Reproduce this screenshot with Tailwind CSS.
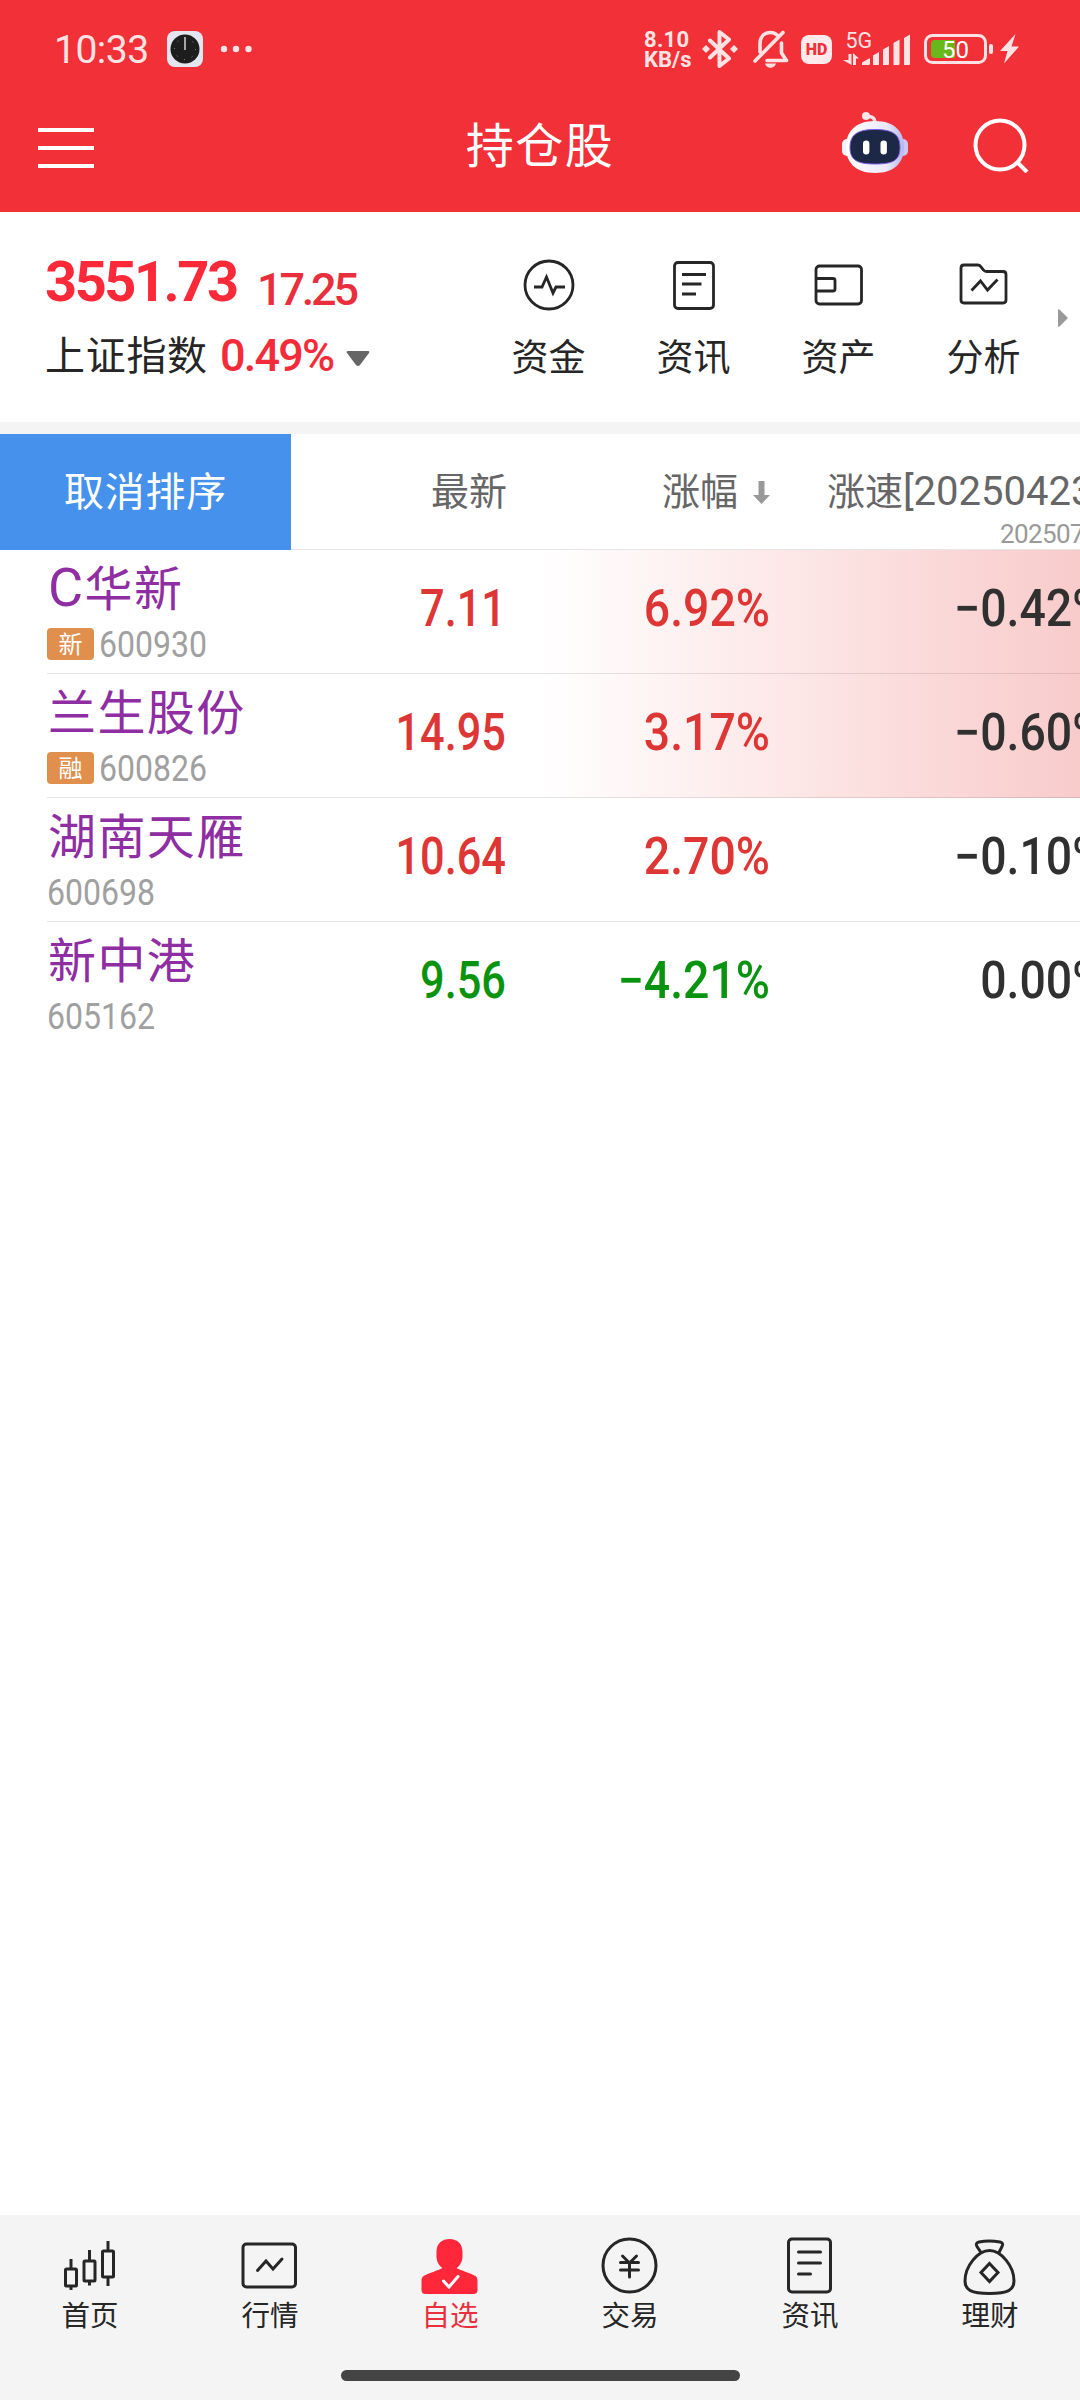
<!DOCTYPE html>
<html lang="zh-CN">

<head>
    <meta charset="UTF-8" />
    <meta name="viewport" content="width=device-width, initial-scale=1.0" />
    <script src="https://cdn.jsdelivr.net/npm/@tailwindcss/browser@4"></script>
    <title>持仓股</title>
</head>

<body class="w-[1080px] h-[2400px] flex flex-col bg-white overflow-hidden text-[#262626] font-['Noto_Sans_CJK_SC',sans-serif]">
    <!-- Header -->
    <header class="h-[212px] shrink-0 bg-[#f13038] text-white">
        <!-- Status bar -->
        <div class="h-[98px] flex items-center justify-between pl-[54px] pr-[61px] text-[#ffe3e4] font-[Roboto,sans-serif]">
            <div class="flex items-center">
                <span class="w-[113px] text-[39px] leading-none tracking-[-0.5px] mt-0.5">10:33</span>
                <svg class="w-9 h-9" viewBox="0 0 36 36">
                    <rect width="36" height="36" rx="8" fill="#e3e6ee" />
                    <circle cx="18" cy="18" r="14.5" fill="#1d1d1d" />
                    <circle cx="18" cy="18" r="10.5" fill="none" stroke="#999" stroke-width="1" stroke-dasharray="1 7.2" />
                    <path d="M18 6v13" stroke="#a5a5a5" stroke-width="2" />
                </svg>
                <svg class="w-8 h-2 ml-[17px]" viewBox="0 0 32 8" fill="currentColor">
                    <circle cx="4" cy="4" r="3.2" />
                    <circle cx="16" cy="4" r="3.2" />
                    <circle cx="28.500" cy="4" r="3.2" />
                </svg>
            </div>
            <div class="flex items-center">
                <div class="w-[49px] text-[22px] leading-[20px] font-bold mt-0.5 -ml-px mr-px">
                    <div class="tracking-[0.3px]">8.10</div>
                    <div>KB/s</div>
                </div>
                <svg class="w-9 h-[38px] ml-2" viewBox="0 0 36 38" fill="none" stroke="currentColor" stroke-width="4"
                    stroke-linejoin="round" stroke-linecap="round">
                    <path d="M8 10.500 27 28.500 17.500 36V2L27 9.500 8 27.500" />
                    <path d="M4 15l4 4-4 4-4-4zM32 15l4 4-4 4-4-4z" fill="currentColor" stroke="none" />
                </svg>
                <svg class="w-9 h-[38px] ml-[15px]" viewBox="0 0 36 38" fill="none" stroke="currentColor" stroke-width="3.600"
                    stroke-linecap="round" stroke-linejoin="round">
                    <path d="M2 31 30 2.500M7 22V14C7 7 11 2.500 17.500 2.500c3 0 5 1 6.500 2.500M28.500 13v10l5 7.500H14" />
                    <path d="M12 33.500h11c-1 3-3 4.300-5.500 4.300S13 36.500 12 33.500z" fill="currentColor" stroke="none" />
                </svg>
                <div class="w-[31px] h-[29px] ml-3 rounded-lg bg-[#ffe9ea] text-[#f13038] text-[16px] leading-[29px] font-black text-center">HD</div>
                <svg class="w-[68px] h-[34px] ml-[11px]" viewBox="0 0 68 34" fill="currentColor">
                    <text x="2.500" y="15.500" font-size="21.500">5G</text>
                    <path d="M5.500 22h3v11L0 28h5.500zM10 33V21l6 5.500h-3V33z" />
                    <path d="M19 33v-2.500l8-4.500v5.500q0 1.500-1.500 1.500zM30 33V23.500l6-3.500v12q0 1-1 1zM40 33V17.500l6-3.500v18q0 1-1 1zM50.500 33V11l6-3.500v24.500q0 1-1 1zM61 33V6l6-3.500v29.500q0 1-1 1z" />
                </svg>
                <svg class="w-[70px] h-[30px] ml-[13px]" viewBox="0 0 70 30">
                    <rect x="1.500" y="1.500" width="60" height="27" rx="7" fill="none" stroke="currentColor" stroke-width="3" />
                    <path d="M31 6v18H11q-4 0-4-4V10q0-4 4-4z" fill="#68b81c" />
                    <rect x="65" y="10" width="4" height="10" rx="2" fill="currentColor" />
                    <text x="31.500" y="23.500" font-size="24" fill="#fff" text-anchor="middle">50</text>
                </svg>
                <svg class="w-[19px] h-[30px] ml-1.5" viewBox="0 0 19 30" fill="currentColor">
                    <path d="M15.500 0 0 17h7.500L4 29.500 19 12.500h-7.500z" />
                </svg>
            </div>
        </div>
        <!-- Title bar -->
        <div class="h-[94px] grid grid-cols-3 items-center pl-[38px] pr-[51px]">
            <svg class="w-14 h-10 mt-1.5" viewBox="0 0 56 40" stroke="#fff" stroke-width="4">
                <path d="M0 2h56M0 20h56M0 38h56" />
            </svg>
            <h1 class="text-[48px] leading-[60px] tracking-[1.5px] text-center -mt-1.5 ml-[13px]">持仓股</h1>
            <div class="flex items-center justify-end gap-[64px]">
                <svg class="w-[66px] h-[62px] -mt-1" viewBox="0 0 66 62">
                    <defs>
                        <linearGradient id="shell" x1="0" x2="1">
                            <stop offset="0" stop-color="#fff" />
                            <stop offset=".7" stop-color="#ece9fb" />
                            <stop offset="1" stop-color="#b5b7ee" />
                        </linearGradient>
                    </defs>
                    <path d="M25 4.500q8-1 8 7" fill="none" stroke="#fbdfe8" stroke-width="3.500" />
                    <circle cx="24" cy="4" r="4" fill="#fce6ec" />
                    <rect x="0" y="27" width="12" height="17" rx="5" fill="#f1effc" />
                    <rect x="54" y="27" width="12" height="17" rx="5" fill="#c9caf4" />
                    <path d="M33 9c20 0 29 11 29 26S53 61 33 61 4 50 4 35 13 9 33 9z" fill="url(#shell)" />
                    <path d="M33 17.500c18 0 25 5 25 18S51 52 33 52 8 48 8 35.500s7-18 25-18z" fill="#1d2746" stroke="#7b5ce8" stroke-width="1" />
                    <rect x="21" y="28.500" width="6.400" height="14" rx="3.200" fill="#fff" />
                    <rect x="38.500" y="28.500" width="6.400" height="14" rx="3.200" fill="#fff" />
                </svg>
                <svg class="w-[57px] h-[56px]" viewBox="0 0 57 56" fill="none" stroke="#fff" stroke-width="4">
                    <circle cx="28" cy="28" r="24.500" />
                    <path d="M45 45l10 10" />
                </svg>
            </div>
        </div>
    </header>

    <!-- Index summary and shortcuts -->
    <section class="h-[210px] shrink-0 flex justify-between">
        <div class="pl-[45px] pt-[42px] font-[Roboto,sans-serif] text-[#fc2938]">
            <div class="flex items-start h-[68px]">
                <span class="w-[212px] text-[56px] leading-[56px] font-bold tracking-[-2.5px]">3551.73</span>
                <span class="text-[45px] leading-[56px] font-medium tracking-[-3.2px] mt-2 text-[#ea2f3c]">17.25</span>
            </div>
            <div class="flex items-center h-[68px]">
                <span class="w-[175px] text-[40px] leading-[60px] tracking-[0.7px] text-[#262626] font-['Noto_Sans_CJK_SC',sans-serif] -mt-1.5">上证指数</span>
                <span class="w-[126px] text-[45px] leading-none font-medium tracking-[-1.8px] text-[#f42c3a] -mt-0.5">0.49%</span>
                <svg class="w-6 h-4 mt-1.5" viewBox="0 0 24 16" fill="#666">
                    <path d="M2 0h20q2 0 1 2L14 14q-2 2-4 0L1 2Q0 0 2 0z" />
                </svg>
            </div>
        </div>
        <nav class="flex text-[37px] leading-[50px] pt-[46px] pr-3">
            <a class="w-[145px] flex flex-col items-center gap-[18px] -ml-px mr-px">
                <svg class="w-[54px] h-[54px]" viewBox="0 0 54 54" fill="none" stroke="currentColor" stroke-width="2.800">
                    <circle cx="27" cy="27" r="24" />
                    <path d="M12 29h8l4.500-10L31 35l3-6h9" />
                </svg>
                资金
            </a>
            <a class="w-[145px] flex flex-col items-center gap-[18px] -ml-px mr-px">
                <svg class="w-[54px] h-[54px]" viewBox="0 0 54 54" fill="none" stroke="currentColor" stroke-width="2.800">
                    <rect x="7.500" y="4.500" width="39" height="46" rx="3.500" />
                    <path d="M15 16.500h24M15 26h19.500M15 36h14" />
                </svg>
                资讯
            </a>
            <a class="w-[145px] flex flex-col items-center gap-[18px] -ml-px mr-px">
                <svg class="w-[54px] h-[54px]" viewBox="0 0 54 54" fill="none" stroke="currentColor" stroke-width="2.800">
                    <rect x="4" y="8" width="45.500" height="38" rx="3.500" />
                    <path d="M4 20.500H21q2 0 2 2v8.500q0 2-2 2H4" />
                </svg>
                资产
            </a>
            <a class="w-[145px] flex flex-col items-center gap-[18px] -ml-px mr-px">
                <svg class="w-[54px] h-[54px]" viewBox="0 0 54 54" fill="none" stroke="currentColor" stroke-width="2.800">
                    <path d="M7 7h14q2 0 3 2l2.500 3q1 1.500 3 1.500H46q3 0 3 3V42q0 3-3 3H7q-3 0-3-3V10q0-3 3-3z" />
                    <path d="M14.500 32.500 23.500 23l7 9 10-10.500" />
                </svg>
                分析
            </a>
            <svg class="w-[11px] h-[18px] mt-[51px]" viewBox="0 0 11 18" fill="#999">
                <path d="M1 0.500q1-.500 2 .500l7.500 7.500q.500.500 0 1L3 17q-1 1-2 .500z" />
            </svg>
        </nav>
    </section>

    <div class="h-3 shrink-0 bg-[#f4f4f4]"></div>

    <!-- Holdings table -->
    <main class="flex-1 overflow-hidden">
        <div class="h-[116px] grid grid-cols-[291px_215px_264px_340px] text-[38px] leading-[56px] text-[#666] border-b border-[#e6e6e6]">
            <button class="h-[116px] bg-[#4591ec] text-white text-[40px] tracking-[0.8px] pb-1.5">取消排序</button>
            <div class="text-right pt-[27px] -mr-px">最新</div>
            <div class="flex justify-end gap-[15px] pt-[27px]">
                涨幅
                <svg class="w-[17px] h-[23px] mt-5" viewBox="0 0 17 23" fill="#999">
                    <path d="M5.500 0h6v14H17l-8.500 9L0 14h5.500z" />
                </svg>
            </div>
            <div class="pl-[57px] pt-[27px] whitespace-nowrap">
                <div class="h-[56px]">涨速<span class="font-[Roboto,sans-serif] text-[40px]">[20250423</span></div>
                <div class="pl-[173px] text-[26px] leading-[28px] tracking-[-0.6px] text-[#999] font-[Roboto,sans-serif] mt-[3px]">202507</div>
            </div>
        </div>

        <div id="rows" class="relative bg-linear-to-r from-white from-[50%] to-[#f8cbcb] bg-[length:100%_248px] bg-no-repeat"></div>
    </main>

    <!-- Bottom navigation -->
    <footer class="h-[185px] shrink-0 bg-[#f4f4f4]">
        <nav class="h-[155px] grid grid-cols-6 text-[28.5px] leading-[40px] pt-5">
            <a class="flex flex-col items-center">
                <svg class="w-[60px] h-[60px]" viewBox="0 0 60 60" fill="none" stroke="currentColor" stroke-width="3">
                    <rect x="5.500" y="34" width="11" height="17" rx="1" />
                    <rect x="24" y="26" width="11" height="20" rx="1" />
                    <rect x="42.500" y="16" width="11" height="26" rx="1" />
                    <path d="M11 24v10M11 51v4M29.500 15v11M29.500 46v4.500M48 6v10M48 42v9" />
                </svg>
                <span class="-mt-px">首页</span>
            </a>
            <a class="flex flex-col items-center">
                <svg class="w-[60px] h-[60px]" viewBox="0 0 60 60" fill="none" stroke="currentColor" stroke-width="3">
                    <rect x="3" y="9" width="52.500" height="43" rx="3.500" />
                    <path d="M17.500 35.500 26 26l7 8 9-10" stroke-linecap="round" />
                </svg>
                <span class="-mt-px">行情</span>
            </a>
            <a class="flex flex-col items-center text-[#e8303f]">
                <svg class="w-[60px] h-[60px]" viewBox="0 0 60 60" fill="#ff2739">
                    <path d="M29.500 4c8 0 13 5 13 13v4c0 6-3 10-6 12 3 2 14 5 19 8q2 1.500 2 4v10q0 4-4 4H5.500q-4 0-4-4V45q0-2.500 2-4c5-3 16-6 19-8-3-2-6-6-6-12v-4c0-8 5-13 13-13z" />
                    <path d="M23.500 46l5.500 6L38 41.500" fill="none" stroke="#fff" stroke-width="3" stroke-linecap="round" />
                </svg>
                <span class="-mt-px">自选</span>
            </a>
            <a class="flex flex-col items-center">
                <svg class="w-[60px] h-[60px]" viewBox="0 0 60 60" fill="none" stroke="currentColor" stroke-width="3">
                    <circle cx="29.500" cy="30.500" r="26.500" />
                    <path d="M22.500 21l7 7 7-7M29.500 28v14M20.500 27.500h18M20.500 35h18" stroke-linecap="round" />
                </svg>
                <span class="-mt-px">交易</span>
            </a>
            <a class="flex flex-col items-center">
                <svg class="w-[60px] h-[60px]" viewBox="0 0 60 60" fill="none" stroke="currentColor" stroke-width="3">
                    <rect x="8.500" y="4" width="42" height="53" rx="3.500" />
                    <path d="M18.500 17h22M18.500 28h22M18.500 39h12" stroke-linecap="round" />
                </svg>
                <span class="-mt-px">资讯</span>
            </a>
            <a class="flex flex-col items-center">
                <svg class="w-[60px] h-[60px]" viewBox="0 0 60 60" fill="none" stroke="currentColor" stroke-width="3">
                    <path d="M21 17.500l-4-6q-2-3.500 2-4.500 10-2 21 0 4 1 2 4.500l-3 6" />
                    <path d="M29.500 15.500C41 15.500 54 31 54 46c0 9-6 12.500-24.500 12.500S5 55 5 46C5 31 18 15.500 29.500 15.500z" />
                    <path d="M29.500 28.500l8.500 9-8.500 9-8.500-9z" />
                </svg>
                <span class="-mt-px">理财</span>
            </a>
        </nav>
        <div class="w-[399px] h-[11px] rounded-full bg-[#444] mx-auto"></div>
    </footer>

    <script>
        const stocks = [
            { name: `<span class="font-[Roboto,sans-serif] text-[54px]">C</span>华新`, tag: "新", code: "600930", price: "7.11", change: "6.92%", speed: "−0.42%", color: "text-[#de3535]" },
            { name: "兰生股份", tag: "融", code: "600826", price: "14.95", change: "3.17%", speed: "−0.60%", color: "text-[#de3535]" },
            { name: "湖南天雁", tag: "", code: "600698", price: "10.64", change: "2.70%", speed: "−0.10%", color: "text-[#de3535]" },
            { name: "新中港", tag: "", code: "605162", price: "9.56", change: "−4.21%", speed: "0.00%", color: "text-[#0a930e]" },
        ];

        document.getElementById("rows").innerHTML = stocks.map((stock, i) => `
            <div class="h-[124px] grid grid-cols-[291px_215px_264px_340px] relative font-[Roboto,sans-serif]">
                <div class="pl-[47px]">
                    <div class="h-[75px] pt-[3px] pl-px text-[48px] leading-[64px] tracking-[1.4px] whitespace-nowrap text-[#8f2da3] font-['Noto_Sans_CJK_SC',sans-serif]">${stock.name}</div>
                    <div class="flex items-center h-10 text-[36px] leading-[40px] text-[#a0a0a0]">
                        ${stock.tag ? `<span class="w-[47px] h-8 mr-[5px] -mt-0.5 rounded bg-[#e08f4d] text-white text-[24px] leading-[30px] text-center font-['Noto_Sans_CJK_SC',sans-serif]">${stock.tag}</span>` : ""}
                        <span class="origin-left scale-x-[0.89]">${stock.code}</span>
                    </div>
                </div>
                <div class="text-right text-[51px] leading-[117px] font-medium origin-right scale-x-[0.85] ${stock.color}">${stock.price}</div>
                <div class="text-right text-[51px] leading-[117px] font-medium origin-right scale-x-[0.91] ${stock.color}">${stock.change}</div>
                <div class="text-right pr-1 text-[51px] leading-[117px] font-medium origin-right scale-x-[0.91] text-[#303030]">${stock.speed}</div>
                ${i < stocks.length - 1 ? `<div class="absolute left-[47px] right-0 bottom-0 h-px bg-black/10"></div>` : ""}
            </div>`).join("");
    </script>
</body>

</html>
